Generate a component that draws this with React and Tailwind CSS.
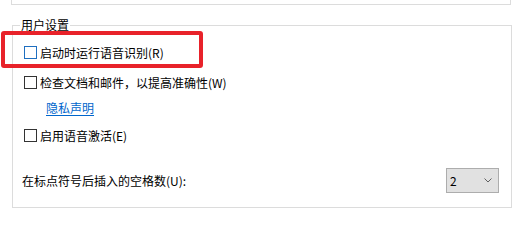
import React from 'react';

const Checkbox = ({ focused }) => (
  <span
    className={`w-[13px] h-[13px] shrink-0 border bg-white ${
      focused ? 'border-[#1f6fc0]' : 'border-[#333333]'
    }`}
  />
);

const CheckRow = ({ label, focused, className }) => (
  <div className={`flex items-center gap-[3px] h-[15px] ml-[2px] ${className}`}>
    <Checkbox focused={focused} />
    <span>{label}</span>
  </div>
);

const App = () => {
  return (
    <div className="relative w-[523px] h-[211px] bg-white overflow-hidden text-[12px] leading-[15px] text-black font-['Noto_Sans_CJK_SC',sans-serif]">
      {/* tail of the box above */}
      <div className="ml-[11px] w-[500px] h-[5px] border-x border-b border-[#dcdcdc]" />

      <fieldset className="ml-[12px] mt-[12px] w-[500px] border border-[#dcdcdc] pl-[9px] pr-[12px] pb-[14px]">
        <legend className="ml-[-2px] px-[1px] leading-[16px]">用户设置</legend>

        <CheckRow className="mt-[12px]" focused label="启动时运行语音识别(R)" />
        <CheckRow className="mt-[15px]" label="检查文档和邮件，以提高准确性(W)" />

        <div className="mt-[10px] h-[15px] ml-[24px]">
          <a href="#" className="text-[#0066cc] underline underline-offset-2">
            隐私声明
          </a>
        </div>

        <CheckRow className="mt-[13px]" label="启用语音激活(E)" />

        <div className="mt-[25px] flex items-center justify-between">
          <span>在标点符号后插入的空格数(U):</span>
          <div className="w-[53px] h-[25px] flex items-center justify-between pl-[3px] pr-[6px] bg-[#e1e1e1] border border-[#adadad]">
            <span>2</span>
            <svg width="8" height="5" viewBox="0 0 8 5" fill="none">
              <polyline points="0.5,0.5 4,4 7.5,0.5" stroke="#606060" strokeWidth="1" />
            </svg>
          </div>
        </div>
      </fieldset>

      {/* red highlight annotation */}
      <div className="absolute left-[1px] top-[31px] w-[202px] h-[37px] border-4 border-[#e8222a] rounded-[3px]" />
    </div>
  );
};

export default App;
